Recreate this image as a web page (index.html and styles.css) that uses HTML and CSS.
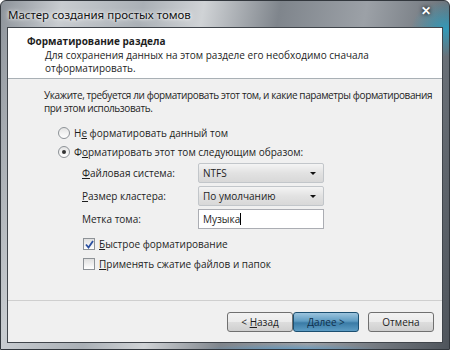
FILE: index.html
```html
<!DOCTYPE html>
<html lang="ru">
<head>
    <meta charset="UTF-8">
    <title>Мастер создания простых томов</title>
    <link rel="stylesheet" href="styles.css">
</head>
<body>
    <div class="window">
        <div class="titlebar">
            <span class="title">Мастер создания простых томов</span>
            <span class="close">✕</span>
        </div>

        <div class="client">
            <div class="header">
                <div class="header-title">Форматирование раздела</div>
                <div class="header-desc">Для сохранения данных на этом разделе его необходимо сначала<br>отформатировать.</div>
            </div>

            <div class="content">
                <p class="intro">Укажите, требуется ли форматировать этот том, и какие параметры форматирования<br>при этом использовать.</p>

                <div class="option">
                    <span class="radio"></span>
                    <span>Н<u>е</u> форматировать данный том</span>
                </div>
                <div class="option">
                    <span class="radio checked"></span>
                    <span>Ф<u>о</u>рматировать этот том следующим образом:</span>
                </div>

                <div class="fields">
                    <span class="field-label"><u>Ф</u>айловая система:</span>
                    <div class="select">NTFS<span class="arrow"></span></div>

                    <span class="field-label"><u>Р</u>азмер кластера:</span>
                    <div class="select">По умолчанию<span class="arrow"></span></div>

                    <span class="field-label">Метка тома:</span>
                    <div class="textbox">Музыка<span class="caret"></span></div>
                </div>

                <div class="checks">
                    <div class="check-row">
                        <span class="checkbox">
                            <svg width="9" height="9" viewBox="0 0 9 9"><path d="M1 4.5 L3.5 7.5 L8 1" fill="none" stroke="#2a4fa0" stroke-width="1.8"/></svg>
                        </span>
                        <span><u>Б</u>ыстрое форматирование</span>
                    </div>
                    <div class="check-row">
                        <span class="checkbox"></span>
                        <span><u>П</u>рименять сжатие файлов и папок</span>
                    </div>
                </div>
            </div>

            <div class="footer">
                <button class="btn">&lt; <u>Н</u>азад</button>
                <button class="btn primary">Далее &gt;</button>
                <button class="btn cancel">Отмена</button>
            </div>
        </div>
    </div>
</body>
</html>
```

FILE: styles.css
```css
body {
    margin: 0;
    font-family: "Open Sans", "Noto Sans", sans-serif;
    font-size: 10px;
    color: #1e1e1e;
}

.window {
    width: 450px;
    height: 350px;
    box-sizing: border-box;
    display: flex;
    flex-direction: column;
    background:
        radial-gradient(ellipse 50px 40px at 445px 28px, rgba(40, 160, 195, 0.85), transparent 70%),
        radial-gradient(ellipse 140px 10px at 290px 350px, rgba(70, 150, 205, 0.8), transparent 70%),
        linear-gradient(100deg, #8d939a 0%, #c8ccd0 12%, #aab0b6 28%, #d0d3d6 40%, #7f858c 55%, #9ca1a7 72%, #6d737a 88%, #4e545b 100%);
    border: 1px solid #32373d;
    border-radius: 6px 6px 0 0;
}

.titlebar {
    height: 26px;
    display: flex;
    align-items: center;
    justify-content: space-between;
    padding: 0 18px 0 7px;
}

.title {
    font-family: "Noto Sans", sans-serif;
    font-size: 11.5px;
    color: #111;
    text-shadow: 0 0 6px #fff, 0 0 3px #fff;
    margin-top: 1px;
}

.close {
    color: #fff;
    font-size: 12px;
    font-weight: bold;
    text-shadow: 0 0 4px #000;
    margin-top: -8px;
}

.client {
    flex: 1;
    margin: 0 6px 6px 6px;
    border: 1px solid #40454b;
    background-color: #f0f0f0;
    display: flex;
    flex-direction: column;
}

.header {
    height: 51px;
    background-color: #fff;
    border-bottom: 1px solid #a9b0b5;
    padding: 7px 0 0 19px;
    box-sizing: border-box;
}

.header-title {
    font-weight: bold;
    line-height: 13px;
}

.header-desc {
    padding-left: 18px;
    margin-top: 1px;
    line-height: 13px;
}

.content {
    flex: 1;
    padding: 10px 0 0 36px;
}

.intro {
    margin: 0 0 8px 0;
    line-height: 13px;
    white-space: nowrap;
    letter-spacing: -0.4px;
}

.option {
    display: flex;
    align-items: center;
    height: 19px;
    padding-left: 14px;
}

.radio {
    width: 10px;
    height: 10px;
    border: 1px solid #8d9297;
    border-radius: 50%;
    background: linear-gradient(#e4e4e4, #fff);
    margin-right: 4px;
    position: relative;
}

.radio.checked::after {
    content: "";
    position: absolute;
    left: 3px;
    top: 3px;
    width: 4px;
    height: 4px;
    border-radius: 50%;
    background-color: #333;
}

.fields {
    display: grid;
    grid-template-columns: 116px 126px;
    grid-auto-rows: 20px;
    row-gap: 3px;
    align-items: center;
    padding-left: 38px;
    margin-top: 2px;
}

.select,
.textbox {
    height: 20px;
    box-sizing: border-box;
    border: 1px solid #c2c6ca;
    padding-left: 4px;
    display: flex;
    align-items: center;
    position: relative;
}

.select {
    background: linear-gradient(#f4f4f4, #e2e2e2 50%, #d8d8d8);
    border-radius: 2px;
}

.arrow {
    position: absolute;
    right: 7px;
    top: 8px;
    border-left: 3px solid transparent;
    border-right: 3px solid transparent;
    border-top: 3px solid #111;
}

.textbox {
    background-color: #fff;
    border-color: #abadb3;
}

.caret {
    display: inline-block;
    width: 1px;
    height: 12px;
    background-color: #000;
}

.checks {
    margin-top: 5px;
}

.check-row {
    display: flex;
    align-items: center;
    height: 20px;
    padding-left: 39px;
}

.checkbox {
    width: 10px;
    height: 10px;
    border: 1px solid #8d9297;
    background: linear-gradient(#e0e0e0, #fff);
    margin-right: 4px;
    display: flex;
    align-items: center;
    justify-content: center;
}

.footer {
    height: 41px;
    border-top: 1px solid #cfcfcf;
    display: flex;
    align-items: center;
    justify-content: flex-end;
    padding: 0 8px 0 0;
}

.btn {
    font-family: "Open Sans", "Noto Sans", sans-serif;
    font-size: 10px;
    width: 66px;
    height: 20px;
    padding: 0;
    border: 1px solid #707070;
    border-radius: 3px;
    background: linear-gradient(#f2f2f2 0%, #ebebeb 50%, #dddddd 51%, #cfcfcf 100%);
    color: #1e1e1e;
}

.btn.primary {
    border-color: #1c4f70;
    background: linear-gradient(#9cc4de 0%, #5f9cc2 45%, #3a7ba6 55%, #5c9cc4 100%);
    color: #10304c;
}

.btn.cancel {
    margin-left: 9px;
}
```
